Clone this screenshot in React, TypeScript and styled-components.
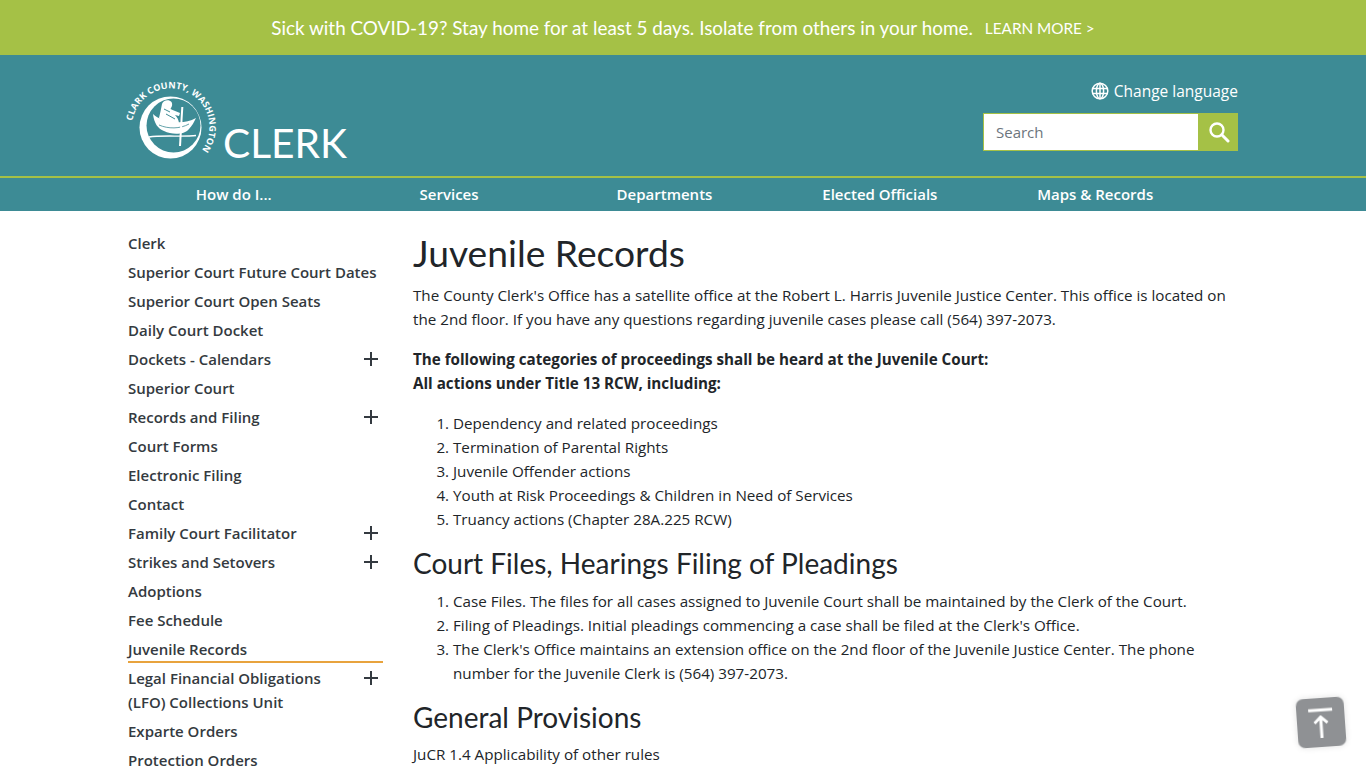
import { createGlobalStyle } from 'styled-components'
import styled from 'styled-components'

const teal = '#3d8b95'
const lime = '#a5c146'

const GlobalStyle = createGlobalStyle`
    html, body {
        margin: 0;
        padding: 0;
        height: 768px;
        overflow: hidden;
        background: #fff;
    }
    body {
        font-family: "Open Sans", "Liberation Sans", sans-serif;
        font-size: 15.2px;
        line-height: 24px;
        color: #212529;
    }
    * {
        box-sizing: border-box;
    }
`

const Banner = styled.div`
    height: 55px;
    background: ${lime};
    color: #fff;
    display: flex;
    align-items: center;
    justify-content: center;
    font-family: Lato, "Open Sans", sans-serif;
    font-size: 18.9px;
`

const BannerLink = styled.span`
    font-size: 15.3px;
    margin-left: 12px;
`

const Header = styled.header`
    height: 121px;
    background: ${teal};
`

const Container = styled.div`
    width: 1110px;
    margin: 0 auto;
`

const HeaderInner = styled(Container)`
    height: 100%;
    display: flex;
    justify-content: space-between;
`

const Brand = styled.div`
    display: flex;
    align-items: flex-end;
    height: 110px;
    margin-left: -2px;
`

const LogoMark = styled.svg`
    width: 92px;
    height: 84px;
    margin-bottom: 3px;
    flex: none;
    overflow: visible;
`

const BrandName = styled.span`
    color: #fff;
    font-family: Lato, "Open Sans", sans-serif;
    font-size: 40.7px;
    line-height: 48px;
    margin-left: 5px;
    margin-bottom: -2px;
`

const Tools = styled.div`
    display: flex;
    flex-direction: column;
    align-items: flex-end;
    padding-top: 24px;
`

const Language = styled.div`
    display: flex;
    align-items: center;
    gap: 5px;
    color: #fff;
    font-size: 15.5px;
    line-height: 24px;
`

const SearchBox = styled.div`
    display: flex;
    width: 255px;
    height: 38px;
    margin-top: 10px;
`

const SearchField = styled.div`
    flex: 1;
    background: #fff;
    border: 1px solid ${lime};
    color: #6c757d;
    font-size: 15px;
    line-height: 36px;
    padding-left: 12px;
`

const SearchButton = styled.div`
    width: 39px;
    flex: none;
    background: ${lime};
    display: flex;
    align-items: center;
    justify-content: center;
`

const NavBar = styled.nav`
    height: 35px;
    background: ${teal};
    border-top: 2px solid ${lime};
`

const NavList = styled.div`
    width: 1114px;
    margin: 0 auto;
    display: grid;
    grid-template-columns: repeat(5, 215.4px);
`

const NavItem = styled.div`
    color: #fff;
    font-size: 15px;
    font-weight: 600;
    line-height: 33px;
    text-align: center;
`

const Body = styled(Container)`
    display: flex;
    gap: 30px;
    padding-top: 18px;
`

const Sidebar = styled.aside`
    width: 255px;
    flex: none;
`

const SideItem = styled.div<{ $active?: boolean }>`
    display: flex;
    justify-content: space-between;
    align-items: flex-start;
    color: #343a40;
    font-size: 15px;
    font-weight: 600;
    line-height: 24px;
    padding: ${(p) => (p.$active ? '2px 0 0' : '2px 0 3px')};
    border-bottom: ${(p) => (p.$active ? '2px solid #e8a33d' : 'none')};
    margin-bottom: ${(p) => (p.$active ? '1px' : '0')};
`

const SideLabel = styled.span<{ $narrow?: boolean }>`
    max-width: ${(p) => (p.$narrow ? '215px' : 'none')};
`

const Plus = styled.svg`
    width: 16px;
    height: 16px;
    margin: 4px 4px 0 0;
    flex: none;
`

const Main = styled.main`
    width: 825px;
`

const Title = styled.h1`
    font-family: Lato, "Open Sans", sans-serif;
    font-size: 37.2px;
    font-weight: 400;
    line-height: 48px;
    margin: 0 0 6px;
`

const Paragraph = styled.p`
    margin: 0 0 16px;
`

const Strong = styled.p`
    margin: 0 0 16px;
    font-weight: 700;
`

const List = styled.ol`
    margin: 0 0 16px;
    padding-left: 40px;
`

const Heading = styled.h2<{ $after: number }>`
    font-family: Lato, "Open Sans", sans-serif;
    font-size: 28px;
    font-weight: 400;
    line-height: 32px;
    margin: 1px 0 ${(p) => p.$after}px;
`

const BackToTop = styled.div`
    position: fixed;
    left: 1297px;
    top: 698px;
    width: 48px;
    height: 49px;
    border-radius: 7px;
    background: #8f9194;
    transform: rotate(-4deg);
    box-shadow: 0 0 6px rgba(0, 0, 0, 0.12);
    display: flex;
    align-items: center;
    justify-content: center;
`

const sideItems = [
    { label: 'Clerk' },
    { label: 'Superior Court Future Court Dates' },
    { label: 'Superior Court Open Seats' },
    { label: 'Daily Court Docket' },
    { label: 'Dockets - Calendars', plus: true },
    { label: 'Superior Court' },
    { label: 'Records and Filing', plus: true },
    { label: 'Court Forms' },
    { label: 'Electronic Filing' },
    { label: 'Contact' },
    { label: 'Family Court Facilitator', plus: true },
    { label: 'Strikes and Setovers', plus: true },
    { label: 'Adoptions' },
    { label: 'Fee Schedule' },
    { label: 'Juvenile Records', active: true },
    { label: 'Legal Financial Obligations (LFO) Collections Unit', plus: true },
    { label: 'Exparte Orders' },
    { label: 'Protection Orders' },
]

const navItems = ['How do I...', 'Services', 'Departments', 'Elected Officials', 'Maps & Records']

function Logo() {
    return (
        <LogoMark viewBox="0 0 92 84">
            <defs>
                <path id="ring" d="M 6.5 43 A 38.7 38.7 0 1 1 68 80" fill="none" />
            </defs>
            <text fill="#fff" fontSize="9" fontWeight="700" letterSpacing="0.1" fontFamily="Open Sans, sans-serif">
                <textPath href="#ring">CLARK COUNTY, WASHINGTON</textPath>
            </text>
            {/* crescent */}
            <circle cx="44.5" cy="49.5" r="31" fill="#fff" />
            <circle cx="47.5" cy="47.5" r="27" fill={teal} />
            {/* canoe */}
            <path d="M27 36 C28 45 32 51 38 53 C46 57 58 57 63 51 C66 48 68 44 70 40 C63 44 55 45 48 44 C40 43 32 41 27 36 Z" fill="#fff" />
            <path d="M33 47 C42 51 54 51 63 46" stroke={teal} strokeWidth="0.8" fill="none" />
            {/* paddler */}
            <path d="M36 26 C37 22 43 21 45.5 24 C47 27 45.5 29 44.5 31 C47 32 51 34 54 35 L53 38 L49 37 C51 39 53 42 53 46 L42 45 C38 44 34 42 33 40 C34 36 35 31 36 26 Z" fill="#fff" />
            <path d="M38 31 L44 34 M40 36 L49 41" stroke={teal} strokeWidth="1" fill="none" />
            {/* paddle and water */}
            <path d="M56.3 29 L54 68" stroke="#fff" strokeWidth="2" />
            <path d="M23 59 C35 57 58 59 70 57.5" stroke="#fff" strokeWidth="1.4" fill="none" />
        </LogoMark>
    )
}

export default function App() {
    return (
        <>
            <GlobalStyle />
            <Banner>
                Sick with COVID-19? Stay home for at least 5 days. Isolate from others in your home.
                <BannerLink>LEARN MORE &gt;</BannerLink>
            </Banner>
            <Header>
                <HeaderInner>
                    <Brand>
                        <Logo />
                        <BrandName>CLERK</BrandName>
                    </Brand>
                    <Tools>
                        <Language>
                            <svg width="18" height="18" viewBox="0 0 18 18" fill="none" stroke="#fff" strokeWidth="1.5">
                                <circle cx="9" cy="9" r="7.8" />
                                <ellipse cx="9" cy="9" rx="3.6" ry="7.8" />
                                <path d="M1.2 6.5h15.6M1.2 11.5h15.6M9 1.2v15.6" />
                            </svg>
                            Change language
                        </Language>
                        <SearchBox>
                            <SearchField>Search</SearchField>
                            <SearchButton>
                                <svg width="22" height="22" viewBox="0 0 22 22" fill="none" stroke="#fff">
                                    <circle cx="9" cy="9" r="6.5" strokeWidth="2.4" />
                                    <path d="M13.8 13.8L20 20" strokeWidth="3" strokeLinecap="round" />
                                </svg>
                            </SearchButton>
                        </SearchBox>
                    </Tools>
                </HeaderInner>
            </Header>
            <NavBar>
                <NavList>
                    {navItems.map((item) => (
                        <NavItem key={item}>{item}</NavItem>
                    ))}
                </NavList>
            </NavBar>
            <Body>
                <Sidebar>
                    {sideItems.map((item) => (
                        <SideItem key={item.label} $active={item.active}>
                            <SideLabel $narrow={item.plus}>{item.label}</SideLabel>
                            {item.plus && (
                                <Plus viewBox="0 0 16 16" stroke="#343a40" strokeWidth="2">
                                    <path d="M8 1v14M1 8h14" />
                                </Plus>
                            )}
                        </SideItem>
                    ))}
                </Sidebar>
                <Main>
                    <Title>Juvenile Records</Title>
                    <Paragraph>
                        The County Clerk's Office has a satellite office at the Robert L. Harris Juvenile Justice
                        Center. This office is located on the 2nd floor. If you have any questions regarding
                        juvenile cases please call (564) 397-2073.
                    </Paragraph>
                    <Strong>
                        The following categories of proceedings shall be heard at the Juvenile Court:
                        <br />
                        All actions under Title 13 RCW, including:
                    </Strong>
                    <List>
                        <li>Dependency and related proceedings</li>
                        <li>Termination of Parental Rights</li>
                        <li>Juvenile Offender actions</li>
                        <li>Youth at Risk Proceedings &amp; Children in Need of Services</li>
                        <li>Truancy actions (Chapter 28A.225 RCW)</li>
                    </List>
                    <Heading $after={10}>Court Files, Hearings Filing of Pleadings</Heading>
                    <List>
                        <li>Case Files. The files for all cases assigned to Juvenile Court shall be maintained by the Clerk of the Court.</li>
                        <li>Filing of Pleadings. Initial pleadings commencing a case shall be filed at the Clerk's Office.</li>
                        <li>
                            The Clerk's Office maintains an extension office on the 2nd floor of the Juvenile Justice
                            Center. The phone number for the Juvenile Clerk is (564) 397-2073.
                        </li>
                    </List>
                    <Heading $after={9}>General Provisions</Heading>
                    <Paragraph>JuCR 1.4 Applicability of other rules</Paragraph>
                </Main>
            </Body>
            <BackToTop>
                <svg width="28" height="32" viewBox="0 0 28 32" fill="none" stroke="#fff" strokeWidth="3">
                    <path d="M2 3h24" />
                    <path d="M14 31V10M7.5 16L14 10l6.5 6" />
                </svg>
            </BackToTop>
        </>
    )
}
